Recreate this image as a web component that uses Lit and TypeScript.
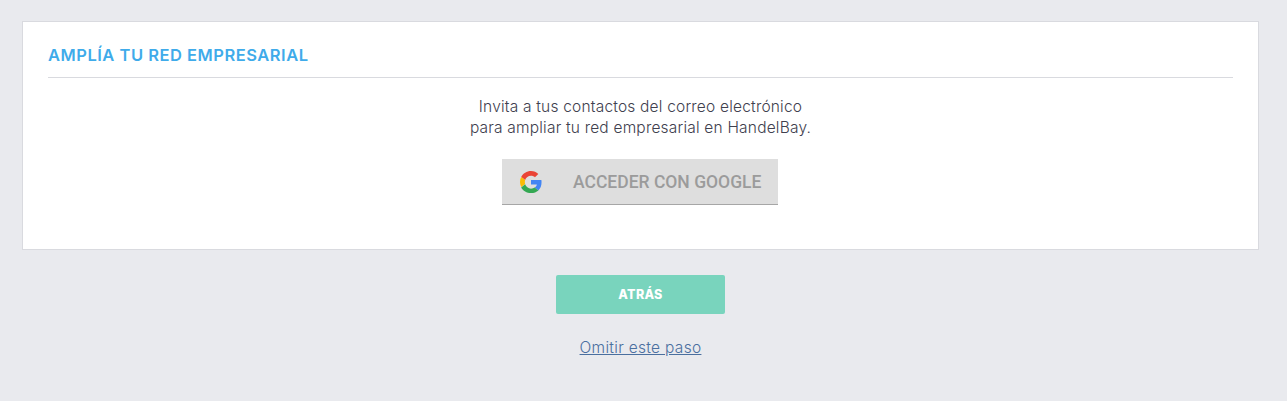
import { html, css, LitElement } from 'lit';
import { customElement } from 'lit/decorators.js';

@customElement('app-root')
export class AppRoot extends LitElement {
  static styles = css`
    :host {
      display: block;
      height: 401px;
      background: #e9eaee;
      padding: 21px 28px 0 22px;
      box-sizing: border-box;
      font-family: 'Inter', 'Liberation Sans', sans-serif;
      overflow: hidden;
    }

    .card {
      height: 229px;
      box-sizing: border-box;
      background: #fff;
      border: 1px solid #d9dadf;
      padding: 0 25px;
    }

    .title {
      margin: 0;
      height: 56px;
      box-sizing: border-box;
      padding-top: 24px;
      border-bottom: 1px solid #d9dadf;
      color: #3fabea;
      font-size: 16.5px;
      line-height: 19px;
      font-weight: 600;
      letter-spacing: 0.51px;
    }

    .intro {
      margin: 18px 0 0;
      text-align: center;
      color: #40404e;
      font-size: 15.5px;
      line-height: 21px;
      font-weight: 350;
      letter-spacing: 0.2px;
    }

    .google-row {
      display: flex;
      justify-content: center;
      padding: 21px 1px 0 0;
    }

    .google {
      display: flex;
      align-items: center;
      width: 276px;
      height: 46px;
      box-sizing: border-box;
      padding-left: 18px;
      background: #dedede;
      border-bottom: 1px solid #a6a6a6;
      color: #9b9b9b;
      font-family: 'Roboto', sans-serif;
      font-size: 17.5px;
      font-weight: 500;
    }

    .google svg {
      width: 22px;
      height: 22px;
      margin-right: 31px;
    }

    .actions {
      display: flex;
      flex-direction: column;
      align-items: center;
      padding-top: 25px;
    }

    .back {
      display: flex;
      align-items: center;
      justify-content: center;
      width: 169px;
      height: 39px;
      background: #79d4bd;
      border-radius: 2px;
      color: #fff;
      font-size: 12.5px;
      font-weight: 800;
      letter-spacing: 0.3px;
    }

    .skip {
      margin-top: 23px;
      color: #4a6f9f;
      font-size: 15.5px;
      line-height: 21px;
      font-weight: 350;
      letter-spacing: 0.3px;
      text-decoration: underline;
    }
  `;

  render() {
    return html`
      <div class="card">
        <h2 class="title">AMPLÍA TU RED EMPRESARIAL</h2>
        <p class="intro">
          Invita a tus contactos del correo electrónico<br />
          para ampliar tu red empresarial en HandelBay.
        </p>
        <div class="google-row">
          <div class="google">
            <svg viewBox="0 0 48 48">
              <path fill="#ea4335" d="M24 10.500c3.300 0 6.300 1.100 8.600 3.400l7.400-7.400C35.800 2.500 30.400 0 24 0 14.600 0 6.500 5.400 2.600 13.200l8.600 6.700C13 14.300 18 10.500 24 10.500z" />
              <path fill="#4285f4" d="M47 24.500c0-1.700-.1-3.200-.4-4.700H24v9.400h12.800c-.6 3-2.200 5.400-4.700 7l8 6.200c4.500-4.200 6.900-10.400 6.900-17.900z" />
              <path fill="#fbbc05" d="M11.200 28.100c-.4-1.300-.7-2.700-.7-4.100s.3-2.800.7-4.100l-8.600-6.700C1 16.500 0 20.100 0 24s1 7.500 2.600 10.800l8.600-6.700z" />
              <path fill="#34a853" d="M24 48c6.500 0 11.900-2.100 16.100-5.600l-8-6.200c-2.100 1.400-4.900 2.300-8.100 2.300-6 0-11-3.800-12.800-9.400l-8.600 6.700C6.500 42.600 14.600 48 24 48z" />
            </svg>
            ACCEDER CON GOOGLE
          </div>
        </div>
      </div>
      <div class="actions">
        <div class="back">ATRÁS</div>
        <a class="skip">Omitir este paso</a>
      </div>
    `;
  }
}
